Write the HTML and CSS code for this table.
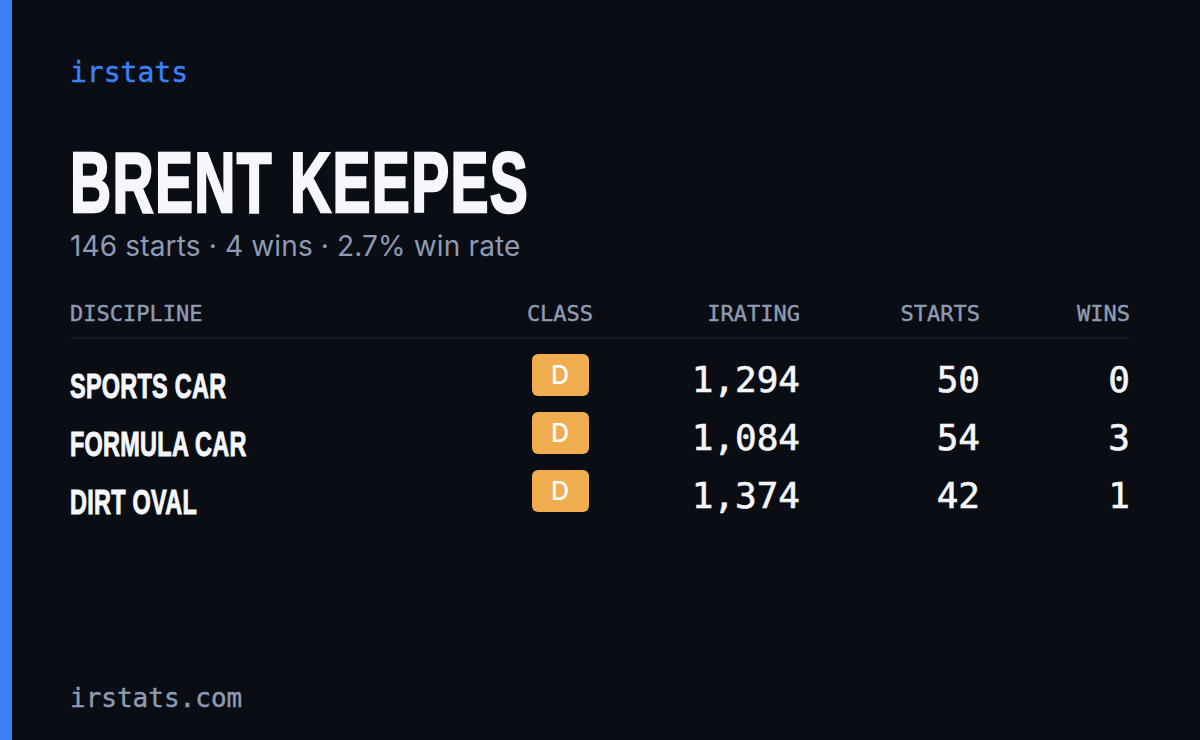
FILE: index.html
```html
<!DOCTYPE html>
<html lang="en">
<head>
<meta charset="utf-8">
<title>irstats – Brent Keepes</title>
<link rel="stylesheet" href="styles.css">
</head>
<body>
<div class="frame">
  <div class="accent"></div>
  <main class="main">
    <div class="logo">irstats</div>
    <h1 class="name"><span class="squeeze">BRENT KEEPES</span></h1>
    <p class="summary">146 starts · 4 wins · 2.7% win rate</p>
    <div class="table">
      <div class="row head">
        <div class="c-disc">DISCIPLINE</div>
        <div class="c-class">CLASS</div>
        <div class="c-num">IRATING</div>
        <div class="c-num">STARTS</div>
        <div class="c-num">WINS</div>
      </div>
      <div class="body">
        <div class="row item">
          <div class="c-disc disc"><span class="squeeze">SPORTS CAR</span></div>
          <div class="c-class"><span class="badge">D</span></div>
          <div class="c-num num">1,294</div>
          <div class="c-num num">50</div>
          <div class="c-num num">0</div>
        </div>
        <div class="row item">
          <div class="c-disc disc"><span class="squeeze">FORMULA CAR</span></div>
          <div class="c-class"><span class="badge">D</span></div>
          <div class="c-num num">1,084</div>
          <div class="c-num num">54</div>
          <div class="c-num num">3</div>
        </div>
        <div class="row item">
          <div class="c-disc disc"><span class="squeeze">DIRT OVAL</span></div>
          <div class="c-class"><span class="badge">D</span></div>
          <div class="c-num num">1,374</div>
          <div class="c-num num">42</div>
          <div class="c-num num">1</div>
        </div>
      </div>
    </div>
    <div class="footer">irstats.com</div>
  </main>
</div>
</body>
</html>
```

FILE: styles.css
```css
html, body {
  margin: 0;
  padding: 0;
  background: #0a0d14;
}
.frame {
  display: flex;
  width: 1200px;
  height: 740px;
  overflow: hidden;
  background: #0a0d14;
}
.accent {
  width: 12px;
  flex: none;
  background: #3b82f6;
}
.main {
  flex: 1;
  display: flex;
  flex-direction: column;
  padding: 0 70px 27px 58px;
}
.logo {
  margin-top: 57px;
  font-family: "DejaVu Sans Mono", monospace;
  font-size: 28px;
  line-height: 32px;
  color: #3b82f6;
  -webkit-text-stroke: 0.4px #3b82f6;
}
.squeeze {
  display: inline-block;
  transform: scaleX(0.67);
  transform-origin: left center;
  white-space: nowrap;
}
.name {
  margin: 51px 0 0;
  font-family: "Liberation Sans", sans-serif;
  font-weight: 700;
  font-size: 85px;
  line-height: 86px;
  letter-spacing: 2px;
  color: #f5f7fa;
  -webkit-text-stroke: 2.5px #f5f7fa;
  white-space: nowrap;
}
.summary {
  margin: 3px 0 0;
  font-family: Inter, sans-serif;
  font-size: 28px;
  line-height: 34px;
  letter-spacing: 0.15px;
  color: #8e9bb3;
}
.table {
  margin-top: 39px;
}
.row {
  display: grid;
  grid-template-columns: 430px 120px 180px 180px 150px;
}
.head {
  font-family: "DejaVu Sans Mono", monospace;
  font-size: 22px;
  line-height: 24px;
  color: #8e9bb3;
  -webkit-text-stroke: 0.4px #8e9bb3;
  padding-bottom: 11px;
  border-bottom: 2px solid #161a24;
}
.c-class { text-align: center; }
.c-num { text-align: right; }
.body {
  padding-top: 7px;
}
.item {
  height: 58px;
  align-items: center;
}
.disc {
  font-family: "Liberation Sans", sans-serif;
  font-weight: 700;
  font-size: 35px;
  line-height: 35px;
  letter-spacing: 0.4px;
  color: #f5f7fa;
  -webkit-text-stroke: 1px #f5f7fa;
  padding-top: 20px;
}
.item .c-class {
  display: flex;
  justify-content: center;
}
.badge {
  width: 57px;
  height: 42px;
  border-radius: 6px;
  background: #efad4f;
  color: #ffffff;
  font-family: Inter, sans-serif;
  font-weight: 500;
  font-size: 25px;
  display: flex;
  align-items: center;
  justify-content: center;
}
.num {
  font-family: "DejaVu Sans Mono", monospace;
  font-size: 36px;
  line-height: 36px;
  color: #f5f7fa;
  -webkit-text-stroke: 0.6px #f5f7fa;
  padding-top: 9px;
}
.footer {
  margin-top: auto;
  font-family: "DejaVu Sans Mono", monospace;
  font-size: 26px;
  line-height: 30px;
  color: #8e9bb3;
  -webkit-text-stroke: 0.4px #8e9bb3;
}
```
